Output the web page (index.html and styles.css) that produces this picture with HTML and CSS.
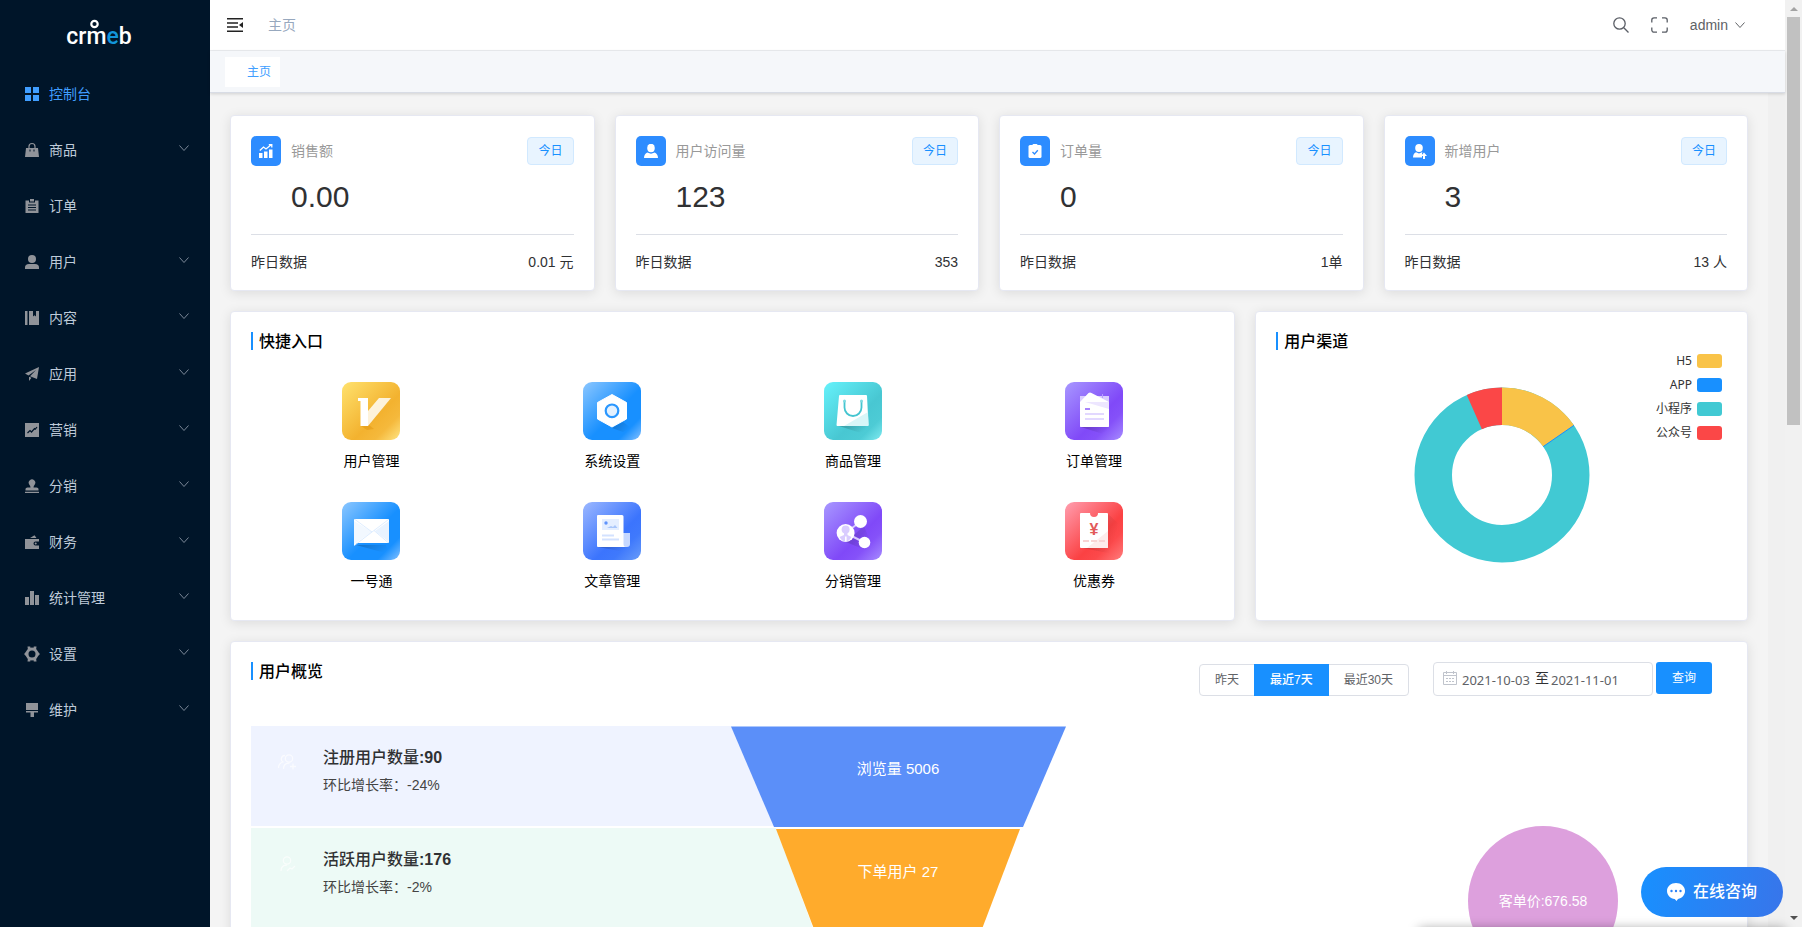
FILE: index.html
```html
<!DOCTYPE html>
<html lang="zh-CN">
<head>
<meta charset="utf-8">
<title>主页 - CRMEB</title>
<link rel="stylesheet" href="styles.css">
</head>
<body>
<svg class="defs" aria-hidden="true">
  <defs>
    <symbol id="down" viewBox="0 0 12 12"><path d="M1.500 3.500L6 8.500L10.500 3.500" fill="none" stroke="currentColor" stroke-width="1"/></symbol>
    <linearGradient id="g-yellow" x1="0" y1="0" x2="1" y2="1"><stop offset="0" stop-color="#ffe26e"/><stop offset=".6" stop-color="#f3b22f"/><stop offset=".78" stop-color="#f5b93c"/><stop offset="1" stop-color="#ffe584"/></linearGradient>
    <linearGradient id="g-blue" x1="0" y1="0" x2="1" y2="1"><stop offset="0" stop-color="#8cc7ff"/><stop offset=".55" stop-color="#1890ff"/><stop offset=".8" stop-color="#1890ff"/><stop offset="1" stop-color="#85c1ff"/></linearGradient>
    <linearGradient id="g-teal" x1="0" y1="0" x2="1" y2="1"><stop offset="0" stop-color="#66f2fb"/><stop offset=".6" stop-color="#48c7d2"/><stop offset=".8" stop-color="#4dcbd5"/><stop offset="1" stop-color="#80eaf0"/></linearGradient>
    <linearGradient id="g-purple" x1="0" y1="0" x2="1" y2="1"><stop offset="0" stop-color="#a898ff"/><stop offset=".6" stop-color="#8049f8"/><stop offset=".75" stop-color="#8551f9"/><stop offset="1" stop-color="#a78cff"/></linearGradient>
    <linearGradient id="g-indigo" x1="0" y1="0" x2="1" y2="1"><stop offset="0" stop-color="#9cb8ff"/><stop offset=".6" stop-color="#3b74fd"/><stop offset=".75" stop-color="#3f79fc"/><stop offset="1" stop-color="#689cf9"/></linearGradient>
    <linearGradient id="g-red" x1="0" y1="0" x2="1" y2="1"><stop offset="0" stop-color="#ff9fb0"/><stop offset=".6" stop-color="#fb4143"/><stop offset=".75" stop-color="#fc494b"/><stop offset="1" stop-color="#ff7d7d"/></linearGradient>
    <linearGradient id="g-shade" x1="0" y1="0" x2="1" y2=".4"><stop offset="0" stop-color="#000" stop-opacity=".22"/><stop offset="1" stop-color="#000" stop-opacity="0"/></linearGradient>
  </defs>
</svg>
<div class="app">
  <aside class="sidebar">
    <a class="logo" href="#" aria-label="crmeb">
      <svg width="72" height="32" viewBox="0 0 72 32"><circle cx="31.500" cy="7" r="3.200" fill="none" stroke="#fff" stroke-width="2.200"/><text class="logo-text" x="36" y="27" text-anchor="middle">crm<tspan class="logo-e">e</tspan>b</text></svg>
    </a>
    <nav class="menu">
      <a class="item active" href="#"><svg class="mi" viewBox="0 0 14 14"><path d="M0 0h6v6H0zM8 0h6v6H8zM0 8h6v6H0zM8 8h6v6H8z"/></svg><span>控制台</span></a>
      <a class="item" href="#"><svg class="mi" viewBox="0 0 14 14"><path d="M1 5h12l1 9H0zM4.500 6.500v2h1v-2zM8.500 6.500v2h1v-2z" fill-rule="evenodd"/><path d="M4 5V3.500a3 3 0 0 1 6 0V5" fill="none" stroke="currentColor" stroke-width="1.200"/></svg><span>商品</span><svg class="arrow"><use href="#down"/></svg></a>
      <a class="item" href="#"><svg class="mi" viewBox="0 0 14 14"><path d="M.5 1.500h3.500v2h6v-2h3.500V14H.5zM3 5.500v1h8v-1zM3 8v1h8V8zM3 10.500v1h8v-1z" fill-rule="evenodd"/><path d="M5 0h4v2.500H5z"/></svg><span>订单</span></a>
      <a class="item" href="#"><svg class="mi" viewBox="0 0 14 14"><circle cx="7" cy="4" r="4"/><path d="M0 14v-1.500Q0 9 4 9h6q4 0 4 3.500V14z"/></svg><span>用户</span><svg class="arrow"><use href="#down"/></svg></a>
      <a class="item" href="#"><svg class="mi" viewBox="0 0 14 14"><path d="M0 0h2.500v14H0zM4 0h4v5.500l1.500-1.200L11 5.500V0h3v14H4z"/></svg><span>内容</span><svg class="arrow"><use href="#down"/></svg></a>
      <a class="item" href="#"><svg class="mi" viewBox="0 0 14 14"><path d="M14 0L0 6.500l3.500 2L11 3 5 9.300l7 2.700zM4 9.800v4.200l2.500-3.200z"/></svg><span>应用</span><svg class="arrow"><use href="#down"/></svg></a>
      <a class="item" href="#"><svg class="mi" viewBox="0 0 14 14"><path d="M0 0h14v14H0z"/><path d="M2.500 10l2.500-2.500 1.500 1.500 3-3.500.8.700L12 4" fill="none" stroke="#001529" stroke-width="1.200"/></svg><span>营销</span><svg class="arrow"><use href="#down"/></svg></a>
      <a class="item" href="#"><svg class="mi" viewBox="0 0 14 14"><path d="M0 12.800h14V14H0zM.5 11.500V10q0-1.500 2-1.500H5.500Q5.500 7 4.200 5.500A3.300 3.300 0 1 1 9.800 5.500Q8.500 7 8.500 8.500h3q2 0 2 1.500v1.500z"/></svg><span>分销</span><svg class="arrow"><use href="#down"/></svg></a>
      <a class="item" href="#"><svg class="mi" viewBox="0 0 14 14"><path d="M0 4h14v2.500H10.500a2 2 0 0 0 0 4H14V14H0zM5 3l4.500-2.800L11.500 3z"/><circle cx="10.700" cy="8.500" r="1"/></svg><span>财务</span><svg class="arrow"><use href="#down"/></svg></a>
      <a class="item" href="#"><svg class="mi" viewBox="0 0 14 14"><path d="M0 6h4v8H0zM5 0h4v14H5zM10 4h4v10h-4z"/></svg><span>统计管理</span><svg class="arrow"><use href="#down"/></svg></a>
      <a class="item" href="#"><svg class="mi" viewBox="0 0 14 14"><circle cx="7" cy="7" r="5" fill="none" stroke="currentColor" stroke-width="3"/><path d="M2.500-.5h2.700L5.800 2 3 3.200zM11.500-.5H8.800L8.200 2 11 3.200zM2.500 14.500h2.700l.6-2.500L3 10.800zM11.500 14.500H8.800L8.200 12l2.800-1.200zM-1 7L1.500 4.500v5zM15 7L12.500 4.500v5z"/></svg><span>设置</span><svg class="arrow"><use href="#down"/></svg></a>
      <a class="item" href="#"><svg class="mi" viewBox="0 0 14 14"><path d="M1 0h12v7H1zM1 8h12v1.500H9V14H5.500V9.500H1z"/></svg><span>维护</span><svg class="arrow"><use href="#down"/></svg></a>
    </nav>
  </aside>

  <main class="main">
    <header class="topbar">
      <button class="icon-btn dark" aria-label="收起菜单"><svg width="16" height="16" viewBox="0 0 16 16" fill="none" stroke="currentColor" stroke-width="1.400"><path d="M0 1.700h16M0 6h11M0 10h11M0 14.300h16"/><path d="M16 5v6l-4-3z" fill="currentColor" stroke="none"/></svg></button>
      <a class="crumb" href="#">主页</a>
      <div class="tools">
        <button class="icon-btn" aria-label="搜索"><svg width="16" height="16" viewBox="0 0 16 16" fill="none" stroke="currentColor" stroke-width="1.300"><circle cx="6.500" cy="6.500" r="5.700"/><path d="M10.800 10.800L15.500 15.500"/></svg></button>
        <button class="icon-btn" aria-label="全屏"><svg width="17" height="16" viewBox="0 0 17 16" fill="none" stroke="currentColor" stroke-width="1.300"><path d="M6 .8H3A2.200 2.200 0 0 0 .8 3v2.500M11 .8h3A2.200 2.200 0 0 1 16.200 3v2.500M6 15.200H3A2.200 2.200 0 0 1 .8 13v-2.500M11 15.200h3a2.200 2.200 0 0 0 2.200-2.200v-2.500"/></svg></button>
        <button class="user">admin<svg width="12" height="12"><use href="#down"/></svg></button>
      </div>
    </header>
    <div class="tabs"><a class="tab" href="#">主页</a></div>

    <div class="content">
      <div class="board">
        <section class="stats">
          <article class="card stat">
            <div class="stat-head"><span class="badge"><svg width="14" height="14" viewBox="0 0 14 14" fill="#fff"><path d="M0 9h3.500v5H0zM5 7.500h3.500V14H5zM10 5.500h3.500V14H10z"/><path d="M.8 6.500L4.500 3l2.500 2 5.500-4.500M9.800.6h3v3" fill="none" stroke="#fff" stroke-width="1.300"/></svg></span><span class="stat-name">销售额</span><span class="tag">今日</span></div>
            <div class="stat-num">0.00</div>
            <div class="stat-foot"><span>昨日数据</span><span>0.01 元</span></div>
          </article>
          <article class="card stat">
            <div class="stat-head"><span class="badge"><svg width="14" height="14" viewBox="0 0 14 14" fill="#fff"><ellipse cx="7" cy="4" rx="3.800" ry="4.200"/><path d="M0 14q0-4 3.200-5.500L7 9.800l3.800-1.300Q14 10 14 14z"/></svg></span><span class="stat-name">用户访问量</span><span class="tag">今日</span></div>
            <div class="stat-num">123</div>
            <div class="stat-foot"><span>昨日数据</span><span>353</span></div>
          </article>
          <article class="card stat">
            <div class="stat-head"><span class="badge"><svg width="14" height="14" viewBox="0 0 14 14"><rect x=".5" y="1" width="13" height="13" rx="1.500" fill="#fff"/><rect x="4.500" width="5" height="3" rx="1" fill="#fff"/><path d="M4.500 8l2 2 3.300-3.800" fill="none" stroke="#2d8cff" stroke-width="1.300"/></svg></span><span class="stat-name">订单量</span><span class="tag">今日</span></div>
            <div class="stat-num">0</div>
            <div class="stat-foot"><span>昨日数据</span><span>1单</span></div>
          </article>
          <article class="card stat">
            <div class="stat-head"><span class="badge"><svg width="14" height="15" viewBox="0 0 14 15"><g fill="#fff"><ellipse cx="6" cy="4" rx="3.800" ry="4"/><path d="M0 13.500q0-4 3-5.200l3 1.300 3-1.300q3 1.200 3 5.200z"/></g><path d="M11 15V8.500" stroke="#2d8cff" stroke-width="4"/><path d="M11 8.500l3 3.500h-2v3h-2v-3H8z" fill="#fff"/></svg></span><span class="stat-name">新增用户</span><span class="tag">今日</span></div>
            <div class="stat-num">3</div>
            <div class="stat-foot"><span>昨日数据</span><span>13 人</span></div>
          </article>
        </section>

        <section class="middle">
          <article class="card quick">
            <h2 class="title">快捷入口</h2>
            <div class="entries">
              <a class="entry" href="#"><svg width="58" height="58" viewBox="0 0 58 58"><rect width="58" height="58" rx="9" fill="url(#g-yellow)"/><path d="M19 44l8-1 5 4-7 1z" fill="#d98a00" opacity=".35"/><path d="M16 16h10v28h-7.500L18.500 19H16z" fill="#fff"/><path d="M37 16h12L26 44V29z" fill="#fff" opacity=".82"/></svg>用户管理</a>
              <a class="entry" href="#"><svg width="58" height="58" viewBox="0 0 58 58"><rect width="58" height="58" rx="9" fill="url(#g-blue)"/><path d="M29 46l11-6 8 6-8 4z" fill="url(#g-shade)"/><path d="M29 12.500L43.500 20.500V37L29 45L14.500 37V20.500z" fill="#fff" stroke="#fff" stroke-linejoin="round"/><circle cx="29" cy="28.800" r="6.300" fill="#e3f1ff" stroke="#2a97ff" stroke-width="2.200"/></svg>系统设置</a>
              <a class="entry" href="#"><svg width="58" height="58" viewBox="0 0 58 58"><rect width="58" height="58" rx="9" fill="url(#g-teal)"/><path d="M15 44h27l-2 8z" fill="url(#g-shade)"/><path d="M16 13h26q1 0 1 1l1.500 29q0 1-1 1h-30q-1 0-1-1L15 14q0-1 1-1z" fill="#fff"/><path d="M20 44l24-14 .5 13q0 1-1 1z" fill="#d8f6f8"/><path d="M20.500 19v6.500a8.500 8.500 0 0 0 17 0V19" fill="none" stroke="#45c5d0" stroke-width="1.800"/><circle cx="20.500" cy="19" r="1.500" fill="#7fdbe2"/><circle cx="37.500" cy="19" r="1.500" fill="#7fdbe2"/></svg>商品管理</a>
              <a class="entry" href="#"><svg width="58" height="58" viewBox="0 0 58 58"><rect width="58" height="58" rx="9" fill="url(#g-purple)"/><path d="M16 45h27l-2 8z" fill="url(#g-shade)"/><path d="M15 14h29v30q0 1-1 1H16q-1 0-1-1z" fill="#d9cbff"/><path d="M15 20l8.500-9q1.500-1 3 0L44 20v24q0 1-1 1H16q-1 0-1-1z" fill="#fff"/><path d="M20 20h24v7z" fill="#ede6ff"/><path d="M20 27h5" stroke="#a883fb" stroke-width="2"/><path d="M20 32h19M20 37h19" stroke="#e2d8ff" stroke-width="2"/><path d="M37.500 12v4" stroke="#b69bff"/></svg>订单管理</a>
              <a class="entry" href="#"><svg width="58" height="58" viewBox="0 0 58 58"><rect width="58" height="58" rx="9" fill="url(#g-blue)"/><path d="M14 43h30l3 9z" fill="url(#g-shade)"/><path d="M13 17h33q1 0 1 1v22q0 1-1 1H15l-3 3V18q0-1 1-1z" fill="#fff"/><path d="M12 19l18 11-18 12z" fill="#f2f8ff"/><path d="M47 19L33 29l14 11z" fill="#e9f3ff"/><path d="M13 17.500l17 12.500 16.500-12.500M30 30L13 43M32 28.500l14 12" fill="none" stroke="#d5e8ff" stroke-width=".8"/></svg>一号通</a>
              <a class="entry" href="#"><svg width="58" height="58" viewBox="0 0 58 58"><rect width="58" height="58" rx="9" fill="url(#g-indigo)"/><path d="M15 45h27v5z" fill="url(#g-shade)"/><path d="M39 31h8v11q0 3-3 3h-5z" fill="#c6d8ff"/><path d="M15 13h24q1.500 0 1.500 1.500V42q0 3 2.500 3H15q-1 0-1-1V14q0-1 1-1z" fill="#fff"/><path d="M19 17h17v11H19z" fill="#e4eeff"/><circle cx="23" cy="21" r="1.700" fill="#5f92fb"/><path d="M24 26l4-2 2 1 2-2 2.500 3z" fill="#a8c6fa"/><path d="M19 33.500h12M19 37.500h17" stroke="#d3e2ff" stroke-width="2"/></svg>文章管理</a>
              <a class="entry" href="#"><svg width="58" height="58" viewBox="0 0 58 58"><rect width="58" height="58" rx="9" fill="url(#g-purple)"/><path d="M22 40l18-16 8 20-4 5z" fill="url(#g-shade)"/><path d="M40.500 40.500L21.600 31L36.500 19.500" fill="none" stroke="#d8c9ff" stroke-width="2"/><circle cx="21.600" cy="31" r="9" fill="#fff"/><circle cx="36.500" cy="19.500" r="6.500" fill="#fff"/><circle cx="40.500" cy="40.500" r="5.800" fill="#fff"/><circle cx="21.600" cy="27.500" r="4" fill="#d9ccff"/><path d="M20 30h3.500v3l4 2q-2.500 4.500-6 4.500t-6-4.500l4.500-2z" fill="#d9ccff"/><path d="M21 34.500h1.600v4.500H21z" fill="#fff"/></svg>分销管理</a>
              <a class="entry" href="#"><svg width="58" height="58" viewBox="0 0 58 58"><rect width="58" height="58" rx="9" fill="url(#g-red)"/><path d="M43 12l10 9-5 31-30-6h25z" fill="url(#g-shade)"/><path d="M16 11h9a4 4 0 0 0 8 0h9q1 0 1 1v33q0 1-1 1H16q-1 0-1-1V12q0-1 1-1z" fill="#fff"/><path d="M22 46l21-17v16q0 1-1 1z" fill="#fdecec"/><path d="M18 39h22" stroke="#f8d4d4" stroke-width="1.800" stroke-dasharray="6 2"/><text class="yen" x="29" y="33" text-anchor="middle">¥</text></svg>优惠券</a>
            </div>
          </article>
          <article class="card channel">
            <h2 class="title">用户渠道</h2>
            <svg class="donut" width="176" height="176" viewBox="-88 -88 176 176">
              <circle r="68.750" fill="none" stroke="#41c9d3" stroke-width="37.500"/>
              <path d="M0-87.500A87.500 87.500 0 0 1 72-49.700L41.200-28.400A50 50 0 0 0 0-50z" fill="#f9c348"/>
              <path d="M72-49.700L41.200-28.400" stroke="#1890ff"/>
              <path d="M0-87.500A87.500 87.500 0 0 0-35.200-80.100L-20.100-45.800A50 50 0 0 1 0-50z" fill="#fb4747"/>
            </svg>
            <ul class="legend">
              <li>H5<i class="sw yellow"></i></li>
              <li>APP<i class="sw blue"></i></li>
              <li>小程序<i class="sw teal"></i></li>
              <li>公众号<i class="sw red"></i></li>
            </ul>
          </article>
        </section>

        <section class="card overview">
          <div class="overview-head">
            <h2 class="title">用户概览</h2>
            <form class="filters">
              <div class="range"><button type="button">昨天</button><button type="button" class="on">最近7天</button><button type="button">最近30天</button></div>
              <div class="dates">
                <svg width="14" height="14" viewBox="0 0 14 14" fill="none" stroke="#c0c4cc"><path d="M.5 1.500h13v12H.5zM.5 4.500h13M3.500 0v3M10.500 0v3M3 7.500h2M6 7.500h2M9 7.500h2M3 10.500h2M6 10.500h2M9 10.500h2"/></svg>
                <input aria-label="开始日期" value="2021-10-03"><span>至</span><input aria-label="结束日期" value="2021-11-01">
              </div>
              <button type="button" class="query">查询</button>
            </form>
          </div>
          <div class="funnel">
            <div class="rows">
              <div class="row reg"><svg width="20" height="16" viewBox="0 0 20 16"><circle cx="12" cy="4.500" r="3.700"/><path d="M6.500 15q0-6 6-6M8 1.500a3.500 3.500 0 0 0-2 6.500Q1.500 9.500 1.500 14M13 12.500h6M16 9.500v6"/></svg><div><h3>注册用户数量<b>:90</b></h3><p>环比增长率：-24%</p></div></div>
              <div class="row act"><svg width="20" height="16" viewBox="0 0 20 16"><circle cx="10" cy="4.500" r="3.700"/><path d="M4 15q0-6 6-6M10 15l3-3 2 1 3-3"/></svg><div><h3>活跃用户数量<b>:176</b></h3><p>环比增长率：-2%</p></div></div>
            </div>
            <svg class="cone" width="335" height="204" viewBox="0 0 335 204">
              <path d="M0 0v100h43z" fill="#eff3ff"/><path d="M0 102v100h82L45 102z" fill="#edfaf6"/>
              <path d="M0 .5h335L292 101H43z" fill="#5b8ff9"/><path d="M45 103h244L251 203H83z" fill="#ffab2c"/>
              <text x="167" y="48">浏览量 5006</text><text x="167" y="151">下单用户 27</text>
            </svg>
            <div class="price"><div class="bubble">客单价:676.58</div></div>
          </div>
        </section>
      </div>
    </div>
  </main>

  <div class="scrollbar" aria-hidden="true"><i class="up"></i><i class="thumb"></i><i class="dn"></i></div>
</div>
<div class="panel-shadow"></div>
<button class="chat"><svg width="18" height="20" viewBox="0 0 18 20"><path d="M9 1c5 0 9 3.500 9 8 0 4-3 7.300-7 7.900L9.500 19l-1.800-2C3.500 16.600 0 13.300 0 9c0-4.500 4-8 9-8z" fill="#fff"/><g fill="#2c83f7"><circle cx="4.500" cy="9" r="1.200"/><circle cx="9" cy="9" r="1.200"/><circle cx="13.500" cy="9" r="1.200"/></g></svg>在线咨询</button>
</body>
</html>
```
FILE: styles.css
```css
* { box-sizing: border-box; }
body { margin: 0; font-family: "Liberation Sans", "Noto Sans CJK SC", sans-serif; font-size: 14px; line-height: 20px; color: #303133; overflow: hidden; }
a { color: inherit; text-decoration: none; }
button { font: inherit; color: inherit; background: none; border: 0; padding: 0; margin: 0; cursor: pointer; }
svg { flex: none; display: block; }
h2, h3, p, ul { margin: 0; padding: 0; }
.defs { position: absolute; width: 0; height: 0; }

.app { display: flex; height: 100vh; }

.sidebar { flex: none; width: 210px; background: #001529; overflow: hidden; }
.logo { display: flex; justify-content: center; height: 66px; padding: 17px 12px 0 0; }
.logo-text { font: 500 23px Roboto, sans-serif; fill: #fff; }
.logo-e { fill: #1296db; }
.item { display: flex; align-items: center; height: 56px; padding: 0 20px 0 25px; gap: 10px; color: #bfcbd9; }
.mi { width: 14px; height: 14px; color: #909399; fill: currentColor; overflow: visible; }
.arrow { width: 12px; height: 12px; margin: 0 0 4px auto; color: #7b8797; }
.active, .active .mi { color: #409eff; }

.main { flex: 1; min-width: 0; display: flex; flex-direction: column; background: #f0f0f0; }
.topbar { flex: none; display: flex; align-items: center; height: 51px; padding: 0 39px 0 17px; background: #fff; border-bottom: 1px solid #ebedf0; }
.icon-btn { color: #5a5e66; }
.icon-btn.dark { color: #222; }
.crumb { margin-left: 25px; color: #97a8be; }
.tools { display: flex; align-items: center; margin-left: auto; gap: 22px; color: #606266; }
.user { display: flex; align-items: center; gap: 6px; }
.tabs { flex: none; display: flex; align-items: center; height: 42px; padding: 0 15px; background: #f5f7fa; border-bottom: 1px solid #d8dce5; box-shadow: 0 1px 3px rgba(0, 0, 0, .15); z-index: 1; }
.tab { height: 30px; line-height: 30px; padding: 0 9px 0 22px; background: #fff; color: #409eff; font-size: 12px; }

.content { flex: 1; min-height: 0; overflow: hidden; padding-right: 17px; }
.board { display: flex; flex-direction: column; gap: 20px; padding: 22px 20px; background: #f4f4f4; }
.card { background: #fff; border: 1px solid #e6e8f2; border-radius: 4px; box-shadow: 0 2px 12px rgba(0, 0, 0, .1); padding: 20px; }

.stats { display: grid; grid-template-columns: repeat(4, 1fr); gap: 20px; }
.stat { height: 176px; }
.stat-head { display: flex; align-items: center; gap: 10px; height: 30px; }
.badge { display: grid; place-items: center; width: 30px; height: 30px; border-radius: 5px; background: #2d8cff; }
.stat-name { color: #999; }
.tag { margin-left: auto; height: 28px; line-height: 26px; padding: 0 10px; border: 1px solid #d1e9ff; border-radius: 4px; background: #e8f4ff; color: #1890ff; font-size: 12px; }
.stat-num { height: 69px; padding: 9px 0 0 40px; font-size: 30px; line-height: 44px; border-bottom: 1px solid #dcdfe6; }
.stat-foot { display: flex; justify-content: space-between; padding-top: 17px; }

.middle { display: grid; grid-template-columns: repeat(6, 1fr); gap: 20px; }
.quick { grid-column: span 4; height: 310px; }
.channel { grid-column: span 2; position: relative; }
.title { height: 18px; padding-left: 6px; border-left: 2px solid #1890ff; font-size: 16px; line-height: 20px; font-weight: 500; color: #000; }
.entries { display: grid; grid-template-columns: repeat(4, 1fr); row-gap: 31px; padding-top: 32px; }
.entry { display: flex; flex-direction: column; align-items: center; gap: 11px; color: #000; }
.yen { font: bold 16px "Liberation Sans", sans-serif; fill: #e25a5a; }
.donut { margin: 37px auto 0; }
.legend { position: absolute; top: 37px; right: 25px; list-style: none; font: 12px/24px "Noto Sans", "Noto Sans CJK SC", sans-serif; color: #333; }
.legend li { display: flex; align-items: center; justify-content: flex-end; gap: 5px; }
.sw { width: 25px; height: 14px; border-radius: 3px; }
.yellow { background: #f9c348; }
.blue { background: #1890ff; }
.teal { background: #41c9d3; }
.red { background: #fb4747; }

.overview-head { display: flex; justify-content: space-between; align-items: flex-start; height: 64px; padding-right: 15px; }
.filters { display: flex; align-items: flex-start; font-size: 12px; color: #606266; }
.range { display: flex; height: 32px; margin: 2px 24px 0 0; border: 1px solid #dcdfe6; border-radius: 4px; }
.range button { padding: 0 15px; }
.range .on { margin: -1px 0; padding: 0 16px; background: #1890ff; color: #fff; font-weight: 500; }
.dates { display: flex; align-items: center; width: 220px; height: 34px; padding: 0 10px 2px 9px; margin-right: 3px; border: 1px solid #dcdfe6; border-radius: 4px; }
.dates input { width: 78px; border: 0; padding: 3px 0 0 5px; outline: 0; background: none; font: 13px/20px "Noto Sans", sans-serif; color: #606266; }
.dates span { color: #303133; font-size: 14px; }
.dates input + span + input { padding-left: 2px; }
.query { width: 56px; height: 32px; border-radius: 3px; background: #1890ff; color: #fff; }

.funnel { display: grid; grid-template-columns: 480fr 335px 661fr; }
.rows { display: flex; flex-direction: column; gap: 2px; }
.row { display: flex; height: 100px; padding: 20px 26px; gap: 26px; }
.row svg { margin-top: 8px; fill: none; stroke: #fff; stroke-width: 1.300; opacity: .7; }
.row h3 { font-size: 16px; line-height: 24px; font-weight: 500; color: #303133; }
.row p { padding-top: 5px; line-height: 20px; color: #444; }
.reg { background: #eff3ff; }
.act { background: #edfaf6; }
.cone text { font-size: 15px; fill: #fff; text-anchor: middle; }
.price { display: flex; justify-content: flex-end; padding: 100px 109px 0 0; }
.bubble { display: grid; place-items: center; width: 150px; height: 150px; border-radius: 50%; background: #dda0dd; color: #fff; }

.scrollbar { flex: none; display: flex; flex-direction: column; align-items: center; width: 17px; background: #f1f1f1; }
.up, .dn { border: 4px solid transparent; }
.up { margin: 3px 0 6px; border-bottom-color: #a3a3a3; }
.thumb { width: 13px; height: 44%; background: #c1c1c1; }
.dn { margin: auto 0 3px; border-top-color: #505050; }

.panel-shadow { position: fixed; right: 17px; bottom: -22px; width: 366px; height: 20px; box-shadow: 0 0 12px rgba(0, 0, 0, .4); }
.chat { position: fixed; right: 19px; bottom: 10px; display: flex; align-items: center; justify-content: center; gap: 8px; width: 142px; height: 50px; border-radius: 25px; background: linear-gradient(100deg, #1890ff, #3875ea); color: #fff; font-size: 16px; font-weight: 500; }
```
